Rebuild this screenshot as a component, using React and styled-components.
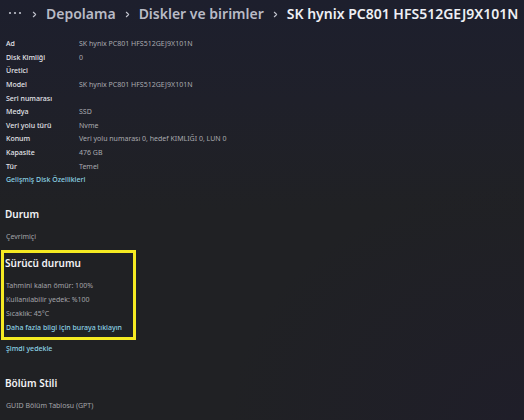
import React from "react";
import styled, { createGlobalStyle } from "styled-components";
import { ChevronRight } from "lucide-react";

const GlobalStyle = createGlobalStyle`
  *{
    box-sizing:border-box;
  }
  body{
    margin:0;
    min-height:100vh;
    color:#e4e5ea;
    font-family:"Noto Sans", "Open Sans", sans-serif;
    font-size:7px;
    line-height:14px;
    background:
      radial-gradient(ellipse at 100% 100%, #1f1e29 0, rgba(31,30,41,0) 40%),
      linear-gradient(180deg, #1d1f2d 0, #1f202a 100px, #202124 210px);
    background-color:#202124;
  }
`;

const Page = styled.main`
  padding:4px 5px 6px;
`;

const Breadcrumb = styled.nav`
  ol{
    display:flex;
    align-items:center;
    gap:7px;
    margin:0;
    padding:0 0 0 3px;
    list-style:none;
  }
  li{
    display:flex;
    align-items:center;
    gap:7px;
    white-space:nowrap;
  }
  svg{
    flex:none;
    color:#c0c2cc;
  }
`;

const Crumb = styled.a`
  color:${({ $current }) => ($current ? "#eeeff4" : "#b9bbc6")};
  font-size:14px;
  line-height:20px;
  font-weight:600;
  text-decoration:none;
`;

const MoreButton = styled.button`
  display:flex;
  padding:4px 1px 4px 0;
  border:none;
  background:none;
  color:#b9bbc6;
`;

const Details = styled.table`
  width:100%;
  height:136px;
  margin-top:13px;
  border-collapse:collapse;
  table-layout:fixed;

  th, td{
    padding:0 0 0 1px;
    line-height:13px;
    text-align:left;
  }
  th{
    width:73px;
    color:#e4e5ea;
    font-weight:500;
    white-space:nowrap;
  }
  td{
    color:#a9aaaf;
  }
`;

const Section = styled.section`
  margin-top:20px;
`;

const Title = styled.h2`
  margin:0 0 8px;
  color:#f2f3f6;
  font-size:10px;
  line-height:15px;
  font-weight:600;
`;

const Text = styled.p`
  margin:0;
  padding-left:1px;
  color:#a3a4a9;
`;

const TextLink = styled.a`
  display:block;
  width:fit-content;
  padding-left:1px;
  color:#8bd3e4;
  font-weight:500;
  text-decoration:none;
`;

const Highlight = styled(Section)`
  width:fit-content;
  margin:6px 0 2px -4px;
  padding:3px 11px 2px 1px;
  border:3px solid #f5ea22;
`;

const details = [
  ["Ad", "SK hynix PC801 HFS512GEJ9X101N"],
  ["Disk Kimliği", "0"],
  ["Üretici", ""],
  ["Model", "SK hynix PC801 HFS512GEJ9X101N"],
  ["Seri numarası", ""],
  ["Medya", "SSD"],
  ["Veri yolu türü", "Nvme"],
  ["Konum", "Veri yolu numarası 0, hedef KIMLIĞI 0, LUN 0"],
  ["Kapasite", "476 GB"],
  ["Tür", "Temel"],
];

const Separator = () => <ChevronRight size={9} strokeWidth={3} aria-hidden="true" />;

const App = () => {
  return (
    <>
      <GlobalStyle />
      <Page>
        <Breadcrumb aria-label="İçerik haritası">
          <ol>
            <li>
              <MoreButton type="button" aria-label="Diğer">
                <svg width="14" height="8" viewBox="0 0 14 8" fill="currentColor">
                  <circle cx="2" cy="3" r="1.1" />
                  <circle cx="7" cy="3" r="1.1" />
                  <circle cx="12" cy="3" r="1.1" />
                </svg>
              </MoreButton>
            </li>
            <li>
              <Separator />
              <Crumb href="#depolama">Depolama</Crumb>
            </li>
            <li>
              <Separator />
              <Crumb href="#diskler">Diskler ve birimler</Crumb>
            </li>
            <li>
              <Separator />
              <Crumb as="span" $current aria-current="page">
                SK hynix PC801 HFS512GEJ9X101N
              </Crumb>
            </li>
          </ol>
        </Breadcrumb>

        <Details>
          <tbody>
            {details.map(([label, value]) => (
              <tr key={label}>
                <th scope="row">{label}</th>
                <td>{value}</td>
              </tr>
            ))}
          </tbody>
        </Details>
        <TextLink href="#ozellikler">Gelişmiş Disk Özellikleri</TextLink>

        <Section>
          <Title>Durum</Title>
          <Text>Çevrimiçi</Text>
        </Section>

        <Highlight>
          <Title>Sürücü durumu</Title>
          <Text>Tahmini kalan ömür: 100%</Text>
          <Text>Kullanılabilir yedek: %100</Text>
          <Text>Sıcaklık: 45°C</Text>
          <TextLink href="#bilgi">Daha fazla bilgi için buraya tıklayın</TextLink>
        </Highlight>
        <TextLink href="#yedekle">Şimdi yedekle</TextLink>

        <Section>
          <Title>Bölüm Stili</Title>
          <Text>GUID Bölüm Tablosu (GPT)</Text>
        </Section>
      </Page>
    </>
  );
};

export default App;
